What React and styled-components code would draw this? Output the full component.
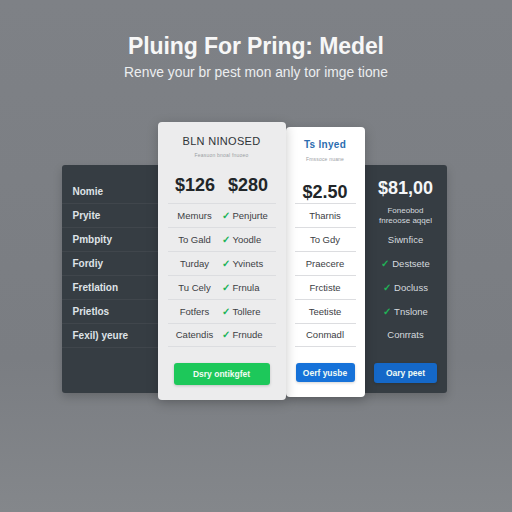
import React from "react";
import styled, { createGlobalStyle } from "styled-components";

const GlobalStyle = createGlobalStyle`
  html, body {
    margin: 0;
    padding: 0;
    background: #7c7f84;
    font-family: "Liberation Sans", Arial, sans-serif;
  }
`;

const Page = styled.div`
  width: 512px;
  height: 512px;
  display: flex;
  flex-direction: column;
  align-items: center;
  padding-top: 33px;
  box-sizing: border-box;
  background: linear-gradient(180deg, #7e8186 0%, #7a7d82 70%, #84878b 100%);
`;

const Title = styled.h1`
  margin: 0;
  font-size: 23px;
  line-height: 26px;
  font-weight: 700;
  color: #f7f7f7;
  letter-spacing: -0.1px;
`;

const Subtitle = styled.p`
  margin: 5px 0 0;
  font-size: 13.8px;
  line-height: 17px;
  color: #eceef0;
`;

const Table = styled.div`
  margin-top: 84px;
  margin-right: 4px;
  width: 385px;
  height: 228px;
  display: flex;
  align-items: flex-start;
  background: #363d43;
  border-radius: 3px;
  box-shadow: 0 4px 10px rgba(0, 0, 0, 0.18);
`;

const LabelCol = styled.div`
  width: 96px;
  padding: 15px 0 0 0;
  display: flex;
  flex-direction: column;
`;

const Label = styled.div`
  height: 24px;
  line-height: 24px;
  padding-left: 11px;
  font-size: 10px;
  font-weight: 700;
  color: #dfe3e7;
  border-bottom: 1px solid rgba(255, 255, 255, 0.05);
  box-sizing: border-box;
`;

const Card = styled.div`
  width: ${(p) => p.$w}px;
  height: ${(p) => p.$h}px;
  margin-top: ${(p) => p.$top}px;
  background: ${(p) => p.$bg};
  border-radius: 4px;
  box-shadow: 0 3px 12px rgba(0, 0, 0, 0.22);
  display: flex;
  flex-direction: column;
  align-items: stretch;
  position: relative;
  z-index: ${(p) => p.$z || 1};
`;

const DarkCol = styled.div`
  width: 82px;
  display: flex;
  flex-direction: column;
  align-items: stretch;
`;

const Head = styled.div`
  height: ${(p) => p.$h}px;
  padding-top: ${(p) => p.$pt}px;
  box-sizing: border-box;
  display: flex;
  flex-direction: column;
  align-items: center;
`;

const PlanName = styled.div`
  font-size: ${(p) => p.$size || 11}px;
  line-height: 14px;
  color: ${(p) => p.$color || "#2f3337"};
  font-weight: ${(p) => p.$weight || 400};
  letter-spacing: 0.3px;
`;

const Tiny = styled.div`
  margin-top: 4px;
  font-size: 5px;
  line-height: 6px;
  color: #9a9ea3;
  letter-spacing: 0.2px;
`;

const PriceRow = styled.div`
  margin-top: ${(p) => p.$mt}px;
  display: flex;
  gap: 13px;
  font-size: 18px;
  line-height: 22px;
  font-weight: 700;
  color: ${(p) => p.$color || "#222629"};
`;

const Rows = styled.div`
  margin: 0 ${(p) => p.$mx}px;
  display: flex;
  flex-direction: column;
`;

const Row = styled.div`
  height: 24px;
  display: grid;
  grid-template-columns: ${(p) => (p.$split ? "1fr 1fr" : "1fr")};
  align-items: center;
  border-top: 1px solid ${(p) => (p.$dark ? "transparent" : "#dcdde0")};
  box-sizing: border-box;
  color: ${(p) => (p.$dark ? "#d5dadf" : "#3c4044")};
  &:last-child {
    border-bottom: 1px solid ${(p) => (p.$dark ? "transparent" : "#dcdde0")};
  }
`;

const Cell = styled.span`
  text-align: ${(p) => p.$align || "center"};
  white-space: nowrap;
  line-height: ${(p) => p.$lh || 12}px;
  font-size: ${(p) => p.$size || 9.5}px;
`;

const Check = styled.span`
  color: #20b357;
  font-weight: 700;
  margin-right: 3px;
`;

const Button = styled.div`
  align-self: center;
  margin-top: 16px;
  width: ${(p) => p.$w}px;
  height: ${(p) => p.$h}px;
  border-radius: 3px;
  background: ${(p) => p.$bg};
  color: #f1fbf4;
  font-size: 8.5px;
  font-weight: 700;
  display: flex;
  align-items: center;
  justify-content: center;
  box-shadow: 0 1px 3px rgba(0, 0, 0, 0.18);
`;

const labels = ["Nomie", "Pryite", "Pmbpity", "Fordiy", "Fretlation", "Prietlos", "Fexil) yeure"];

const featured = [
  ["Memurs", "Penjurte"],
  ["To Gald", "Yoodle"],
  ["Turday", "Yvinets"],
  ["Tu Cely", "Frnula"],
  ["Fotfers", "Tollere"],
  ["Catendis", "Frnude"],
];

const basic = ["Tharnis", "To Gdy", "Praecere", "Frctiste", "Teetiste", "Conmadl"];

const pro = [
  { text: "Siwnfice" },
  { text: "Destsete", check: true },
  { text: "Docluss", check: true },
  { text: "Tnslone", check: true },
  { text: "Conrrats" },
];

export default function App() {
  return (
    <>
      <GlobalStyle />
      <Page>
        <Title>Pluing For Pring: Medel</Title>
        <Subtitle>Renve your br pest mon anly tor imge tione</Subtitle>
        <Table>
          <LabelCol>
            {labels.map((l) => (
              <Label key={l}>{l}</Label>
            ))}
          </LabelCol>

          <Card $w={128} $h={278} $top={-43} $bg="#ececed" $z={2}>
            <Head $h={81} $pt={12}>
              <PlanName>BLN NINOSED</PlanName>
              <Tiny>Feasuon bnoal fnuoeo</Tiny>
              <PriceRow $mt={16}>
                <span>$126</span>
                <span>$280</span>
              </PriceRow>
            </Head>
            <Rows $mx={10}>
              {featured.map(([a, b]) => (
                <Row key={a} $split>
                  <Cell>{a}</Cell>
                  <Cell $align="left">
                    <Check>✓</Check>
                    {b}
                  </Cell>
                </Row>
              ))}
            </Rows>
            <Button $w={96} $h={22} $bg="#1dc85a">
              Dsry ontikgfet
            </Button>
          </Card>

          <Card $w={79} $h={270} $top={-38} $bg="#ffffff">
            <Head $h={76} $pt={11}>
              <PlanName $color="#2c6db0" $weight={700} $size={10}>
                Ts lnyed
              </PlanName>
              <Tiny>Fmssoce nuane</Tiny>
              <PriceRow $mt={19}>
                <span>$2.50</span>
              </PriceRow>
            </Head>
            <Rows $mx={9}>
              {basic.map((t) => (
                <Row key={t}>
                  <Cell>{t}</Cell>
                </Row>
              ))}
            </Rows>
            <Button $w={59} $h={19} $bg="#1672d9">
              Oerf yusbe
            </Button>
          </Card>

          <DarkCol>
            <Head $h={38} $pt={12}>
              <PriceRow $mt={0} $color="#f4f6f8">
                <span>$81,00</span>
              </PriceRow>
            </Head>
            <Rows $mx={0}>
              <Row $dark>
                <Cell $size={8} $lh={10}>
                  Foneobod
                  <br />
                  fnreoose aqqel
                </Cell>
              </Row>
              {pro.map((p) => (
                <Row $dark key={p.text}>
                  <Cell>
                    {p.check && <Check>✓</Check>}
                    {p.text}
                  </Cell>
                </Row>
              ))}
            </Rows>
            <Button $w={63} $h={20} $bg="#1568c8">
              Oary peet
            </Button>
          </DarkCol>
        </Table>
      </Page>
    </>
  );
}
